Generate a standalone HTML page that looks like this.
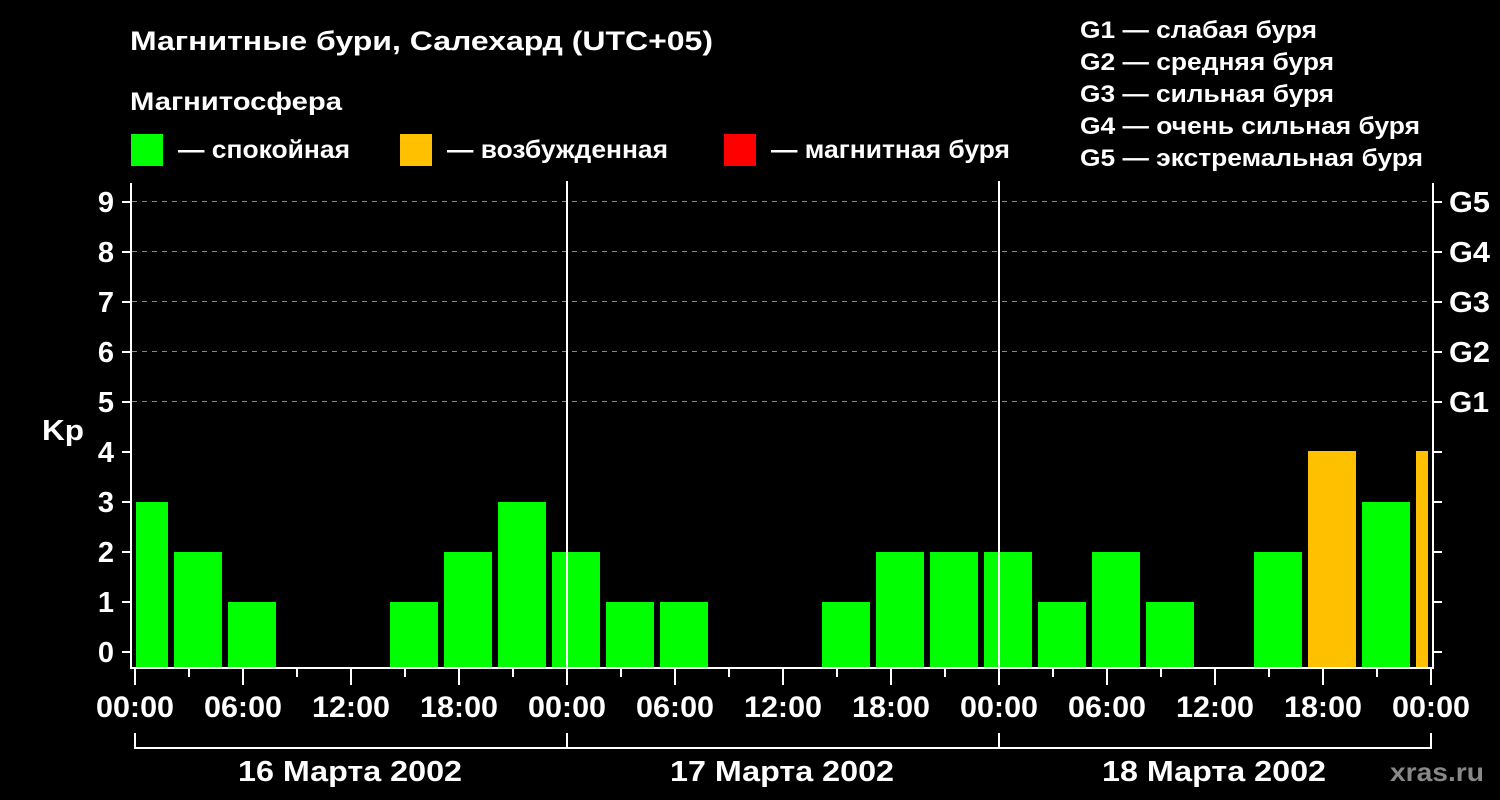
<!DOCTYPE html>
<html><head><meta charset="utf-8"><style>
html,body{margin:0;padding:0;background:#000;}
svg{display:block;}
text{font-family:"Liberation Sans",sans-serif;font-weight:bold;fill:#fff;}
</style></head><body>
<svg width="1500" height="800" viewBox="0 0 1500 800" xmlns="http://www.w3.org/2000/svg">
<rect width="1500" height="800" fill="#000"/>
<text x="130" y="50" font-size="27" textLength="583" lengthAdjust="spacingAndGlyphs">Магнитные бури, Салехард (UTC+05)</text>
<text x="130" y="110" font-size="25" textLength="212" lengthAdjust="spacingAndGlyphs">Магнитосфера</text>
<rect x="131" y="134" width="32" height="32" fill="#00ff00"/>
<text x="178" y="158" font-size="25" textLength="172" lengthAdjust="spacingAndGlyphs">— спокойная</text>
<rect x="400" y="134" width="32" height="32" fill="#ffc000"/>
<text x="447" y="158" font-size="25" textLength="221" lengthAdjust="spacingAndGlyphs">— возбужденная</text>
<rect x="724" y="134" width="32" height="32" fill="#ff0000"/>
<text x="771" y="158" font-size="25" textLength="239" lengthAdjust="spacingAndGlyphs">— магнитная буря</text>
<g font-size="24">
<text x="1080" y="38" textLength="237" lengthAdjust="spacingAndGlyphs">G1 — слабая буря</text>
<text x="1080" y="70" textLength="254" lengthAdjust="spacingAndGlyphs">G2 — средняя буря</text>
<text x="1080" y="102" textLength="254" lengthAdjust="spacingAndGlyphs">G3 — сильная буря</text>
<text x="1080" y="134" textLength="340" lengthAdjust="spacingAndGlyphs">G4 — очень сильная буря</text>
<text x="1080" y="166" textLength="343" lengthAdjust="spacingAndGlyphs">G5 — экстремальная буря</text>
</g>
<g stroke="#888" stroke-width="1" stroke-dasharray="5,5">
<line x1="132" y1="201.5" x2="1433" y2="201.5"/>
<line x1="132" y1="251.5" x2="1433" y2="251.5"/>
<line x1="132" y1="301.5" x2="1433" y2="301.5"/>
<line x1="132" y1="351.5" x2="1433" y2="351.5"/>
<line x1="132" y1="401.5" x2="1433" y2="401.5"/>
</g>
<g>
<rect x="136" y="502" width="32" height="166" fill="#00ff00"/>
<rect x="174" y="552" width="48" height="116" fill="#00ff00"/>
<rect x="228" y="602" width="48" height="66" fill="#00ff00"/>
<rect x="390" y="602" width="48" height="66" fill="#00ff00"/>
<rect x="444" y="552" width="48" height="116" fill="#00ff00"/>
<rect x="498" y="502" width="48" height="166" fill="#00ff00"/>
<rect x="552" y="552" width="48" height="116" fill="#00ff00"/>
<rect x="606" y="602" width="48" height="66" fill="#00ff00"/>
<rect x="660" y="602" width="48" height="66" fill="#00ff00"/>
<rect x="822" y="602" width="48" height="66" fill="#00ff00"/>
<rect x="876" y="552" width="48" height="116" fill="#00ff00"/>
<rect x="930" y="552" width="48" height="116" fill="#00ff00"/>
<rect x="984" y="552" width="48" height="116" fill="#00ff00"/>
<rect x="1038" y="602" width="48" height="66" fill="#00ff00"/>
<rect x="1092" y="552" width="48" height="116" fill="#00ff00"/>
<rect x="1146" y="602" width="48" height="66" fill="#00ff00"/>
<rect x="1254" y="552" width="48" height="116" fill="#00ff00"/>
<rect x="1308" y="451" width="48" height="217" fill="#ffc000"/>
<rect x="1362" y="502" width="48" height="166" fill="#00ff00"/>
<rect x="1416" y="451" width="12" height="217" fill="#ffc000"/>
</g>
<g stroke="#fff" stroke-width="2" fill="none">
<line x1="131" y1="183" x2="131" y2="669"/>
<line x1="1433" y1="183" x2="1433" y2="669"/>
<line x1="130" y1="668" x2="1434" y2="668"/>
<line x1="567" y1="181" x2="567" y2="668"/>
<line x1="999" y1="181" x2="999" y2="668"/>
</g>
<g stroke="#fff" stroke-width="2">
<line x1="122" y1="202" x2="131" y2="202"/><line x1="122" y1="252" x2="131" y2="252"/>
<line x1="122" y1="302" x2="131" y2="302"/><line x1="122" y1="352" x2="131" y2="352"/>
<line x1="122" y1="402" x2="131" y2="402"/><line x1="122" y1="452" x2="131" y2="452"/>
<line x1="122" y1="502" x2="131" y2="502"/><line x1="122" y1="552" x2="131" y2="552"/>
<line x1="122" y1="602" x2="131" y2="602"/><line x1="122" y1="652" x2="131" y2="652"/>
<line x1="1433" y1="202" x2="1442" y2="202"/><line x1="1433" y1="252" x2="1442" y2="252"/>
<line x1="1433" y1="302" x2="1442" y2="302"/><line x1="1433" y1="352" x2="1442" y2="352"/>
<line x1="1433" y1="402" x2="1442" y2="402"/><line x1="1433" y1="452" x2="1442" y2="452"/>
<line x1="1433" y1="502" x2="1442" y2="502"/><line x1="1433" y1="552" x2="1442" y2="552"/>
<line x1="1433" y1="602" x2="1442" y2="602"/><line x1="1433" y1="652" x2="1442" y2="652"/>
<line x1="135" y1="668" x2="135" y2="685"/><line x1="189" y1="668" x2="189" y2="677"/>
<line x1="243" y1="668" x2="243" y2="685"/><line x1="297" y1="668" x2="297" y2="677"/>
<line x1="351" y1="668" x2="351" y2="685"/><line x1="405" y1="668" x2="405" y2="677"/>
<line x1="459" y1="668" x2="459" y2="685"/><line x1="513" y1="668" x2="513" y2="677"/>
<line x1="567" y1="668" x2="567" y2="685"/><line x1="621" y1="668" x2="621" y2="677"/>
<line x1="675" y1="668" x2="675" y2="685"/><line x1="729" y1="668" x2="729" y2="677"/>
<line x1="783" y1="668" x2="783" y2="685"/><line x1="837" y1="668" x2="837" y2="677"/>
<line x1="891" y1="668" x2="891" y2="685"/><line x1="945" y1="668" x2="945" y2="677"/>
<line x1="999" y1="668" x2="999" y2="685"/><line x1="1053" y1="668" x2="1053" y2="677"/>
<line x1="1107" y1="668" x2="1107" y2="685"/><line x1="1161" y1="668" x2="1161" y2="677"/>
<line x1="1215" y1="668" x2="1215" y2="685"/><line x1="1269" y1="668" x2="1269" y2="677"/>
<line x1="1323" y1="668" x2="1323" y2="685"/><line x1="1377" y1="668" x2="1377" y2="677"/>
<line x1="1431" y1="668" x2="1431" y2="685"/>
<line x1="134" y1="748" x2="1432" y2="748"/>
<line x1="135" y1="733" x2="135" y2="749"/><line x1="567" y1="733" x2="567" y2="749"/>
<line x1="999" y1="733" x2="999" y2="749"/><line x1="1431" y1="733" x2="1431" y2="749"/>
</g>
<g font-size="29" text-anchor="end">
<text x="114" y="212">9</text><text x="114" y="262">8</text><text x="114" y="312">7</text>
<text x="114" y="362">6</text><text x="114" y="412">5</text><text x="114" y="462">4</text>
<text x="114" y="512">3</text><text x="114" y="562">2</text><text x="114" y="612">1</text>
<text x="114" y="662">0</text>
</g>
<text x="42" y="440" font-size="29" textLength="42" lengthAdjust="spacingAndGlyphs">Kp</text>
<g font-size="29">
<text x="1449" y="212" textLength="41" lengthAdjust="spacingAndGlyphs">G5</text><text x="1449" y="262" textLength="41" lengthAdjust="spacingAndGlyphs">G4</text><text x="1449" y="312" textLength="41" lengthAdjust="spacingAndGlyphs">G3</text>
<text x="1449" y="362" textLength="41" lengthAdjust="spacingAndGlyphs">G2</text><text x="1449" y="412" textLength="40" lengthAdjust="spacingAndGlyphs">G1</text>
</g>
<g font-size="30" text-anchor="middle">
<text x="135" y="717" textLength="78" lengthAdjust="spacingAndGlyphs">00:00</text>
<text x="243" y="717" textLength="78" lengthAdjust="spacingAndGlyphs">06:00</text>
<text x="351" y="717" textLength="78" lengthAdjust="spacingAndGlyphs">12:00</text>
<text x="459" y="717" textLength="78" lengthAdjust="spacingAndGlyphs">18:00</text>
<text x="567" y="717" textLength="78" lengthAdjust="spacingAndGlyphs">00:00</text>
<text x="675" y="717" textLength="78" lengthAdjust="spacingAndGlyphs">06:00</text>
<text x="783" y="717" textLength="78" lengthAdjust="spacingAndGlyphs">12:00</text>
<text x="891" y="717" textLength="78" lengthAdjust="spacingAndGlyphs">18:00</text>
<text x="999" y="717" textLength="78" lengthAdjust="spacingAndGlyphs">00:00</text>
<text x="1107" y="717" textLength="78" lengthAdjust="spacingAndGlyphs">06:00</text>
<text x="1215" y="717" textLength="78" lengthAdjust="spacingAndGlyphs">12:00</text>
<text x="1323" y="717" textLength="78" lengthAdjust="spacingAndGlyphs">18:00</text>
<text x="1431" y="717" textLength="78" lengthAdjust="spacingAndGlyphs">00:00</text>
</g>
<g font-size="29" text-anchor="middle">
<text x="350" y="781" textLength="224" lengthAdjust="spacingAndGlyphs">16 Марта 2002</text>
<text x="782" y="781" textLength="224" lengthAdjust="spacingAndGlyphs">17 Марта 2002</text>
<text x="1214" y="781" textLength="224" lengthAdjust="spacingAndGlyphs">18 Марта 2002</text>
</g>
<text x="1390" y="781" font-size="26" style="fill:#888" textLength="94" lengthAdjust="spacingAndGlyphs">xras.ru</text>
</svg>
</body></html>
